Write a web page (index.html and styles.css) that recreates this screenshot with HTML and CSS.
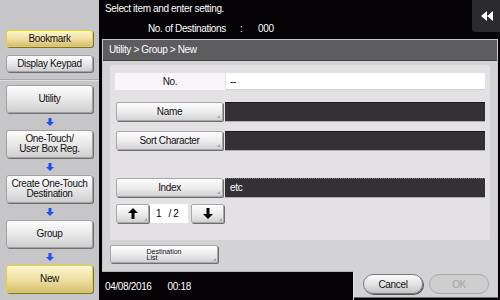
FILE: index.html
```html
<!DOCTYPE html>
<html lang="en">
<head>
  <meta charset="UTF-8">
  <title>Utility &gt; Group &gt; New</title>
  <link rel="stylesheet" href="styles.css">
</head>
<body>

  <div class="screen">

    <!-- Left menu -->
    <aside class="side">
      <div class="side-top">
        <button class="key key-on">Bookmark</button>
        <button class="key">Display Keypad</button>
      </div>
      <div class="steps">
        <button class="step">Utility</button>
        <span class="down"><svg width="8" height="8" viewBox="0 0 8 8"><path d="M2.5 0h3v4h2.5l-4 4-4-4h2.5z" fill="#1e4ff2"/></svg></span>
        <button class="step">One-Touch/<br>User Box Reg.</button>
        <span class="down"><svg width="8" height="8" viewBox="0 0 8 8"><path d="M2.5 0h3v4h2.5l-4 4-4-4h2.5z" fill="#1e4ff2"/></svg></span>
        <button class="step">Create One-Touch<br>Destination</button>
        <span class="down"><svg width="8" height="8" viewBox="0 0 8 8"><path d="M2.5 0h3v4h2.5l-4 4-4-4h2.5z" fill="#1e4ff2"/></svg></span>
        <button class="step">Group</button>
        <span class="down"><svg width="8" height="8" viewBox="0 0 8 8"><path d="M2.5 0h3v4h2.5l-4 4-4-4h2.5z" fill="#1e4ff2"/></svg></span>
        <button class="step step-on">New</button>
      </div>
    </aside>

    <main class="main">
      <header class="head">
        <div class="head-text">
          <p class="msg">Select item and enter setting.</p>
          <p class="count"><span class="count-label">No. of Destinations</span><span class="count-sep">:</span><span>000</span></p>
        </div>
        <button class="back">
          <svg width="12" height="10" viewBox="0 0 12 10"><path d="M6 0v10L0 5zM12 0v10L6 5z" fill="#fff"/></svg>
        </button>
      </header>

      <section class="win">
        <div class="win-title">Utility &gt; Group &gt; New</div>

        <div class="win-body">
          <div class="panel">
            <div class="row row-no">
              <div class="label">No.</div>
              <div class="value">--</div>
            </div>
            <div class="row">
              <button class="btn">Name</button>
              <div class="field"></div>
            </div>
            <div class="row">
              <button class="btn">Sort Character</button>
              <div class="field"></div>
            </div>
            <div class="row row-index">
              <button class="btn">Index</button>
              <div class="field field-dotted">etc</div>
            </div>
            <div class="pager">
              <button class="btn btn-arrow">
                <svg width="10" height="11" viewBox="0 0 10 11"><path d="M5 0l5 5H6.5v6h-3V5H0z" fill="#000"/></svg>
              </button>
              <div class="page">1&nbsp;&nbsp; / 2</div>
              <button class="btn btn-arrow">
                <svg width="10" height="11" viewBox="0 0 10 11"><path d="M5 11l5-5H6.5V0h-3v6H0z" fill="#000"/></svg>
              </button>
            </div>
          </div>
          <button class="btn btn-dest"><span>Destination<br>List</span></button>
        </div>

        <div class="win-foot">
          <div class="clock"><span>04/08/2016</span><span>00:18</span></div>
          <div class="actions">
            <button class="pill">Cancel</button>
            <button class="pill" disabled>OK</button>
          </div>
        </div>
      </section>
    </main>

  </div>

</body>
</html>
```

FILE: styles.css
```css
html, body {
  margin: 0;
  height: 100%;
  background: #050305;
  font-family: "Liberation Sans", Arial, sans-serif;
  font-size: 10px;
  letter-spacing: -0.35px;
}

p {
  margin: 0;
}

button {
  font-family: inherit;
  letter-spacing: inherit;
  padding: 0;
  cursor: pointer;
}

.screen {
  display: flex;
  width: 500px;
  height: 300px;
  overflow: hidden;
}

/* Left menu */
.side {
  width: 99px;
  flex: none;
  background: #c6c5c7;
  display: flex;
  flex-direction: column;
}

.side-top {
  display: flex;
  flex-direction: column;
  gap: 8px;
  padding: 30px 6px 0;
  height: 49px;
  border-bottom: 1px solid #a9a8aa;
  box-shadow: 0 1px 0 #dedde0;
}

.key,
.step {
  width: 87px;
  border: 1px solid #a2a1a3;
  border-radius: 3px;
  background: linear-gradient(#fdfdfd, #e6e6e6 55%, #cfcfcf);
  box-shadow: 1px 1px 0 #6f6e70;
  font-size: 10px;
  color: #111;
  line-height: 10px;
}

.key {
  height: 17px;
}

.key-on,
.step-on {
  border-color: #ecd31a;
  background: linear-gradient(#fcf6cf, #f0e1a4 50%, #d6bf72);
}

.steps {
  display: flex;
  flex-direction: column;
  align-items: center;
  padding-top: 5px;
}

.step {
  height: 28px;
}

.down {
  height: 17px;
  display: flex;
  align-items: center;
  justify-content: center;
}

/* Right side */
.main {
  flex: 1;
  display: flex;
  flex-direction: column;
  padding-left: 3px;
}

.head {
  height: 39px;
  display: flex;
  justify-content: space-between;
  color: #fff;
}

.head-text {
  padding: 3px 0 0 3px;
}

.msg {
  height: 20px;
}

.count {
  display: flex;
  padding-left: 43px;
  white-space: nowrap;
}

.count-label {
  width: 92px;
}

.count-sep {
  width: 18px;
}

.back {
  width: 28px;
  height: 32px;
  border: none;
  border-radius: 0 0 0 4px;
  background: #2b2a2c;
  display: flex;
  align-items: center;
  justify-content: center;
  padding-left: 2px;
}

/* Window */
.win {
  width: 394px;
  height: 257px;
  border: 1px solid #c9c8ca;
  border-bottom-color: #6d6c6e;
  background: #d3d2d4;
  display: flex;
  flex-direction: column;
}

.win-title {
  height: 20px;
  line-height: 20px;
  background: #5d5c5f;
  border-bottom: 1px solid #3e3d40;
  color: #fff;
  padding-left: 6px;
}

.win-body {
  flex: 1;
  padding: 4px 7px 0;
}

.panel {
  background: #e3e1e4;
  border-radius: 2px;
  height: 160px;
  padding: 8px 5px 7px;
}

.row {
  display: flex;
  height: 19px;
  margin-bottom: 10px;
}

.row-no {
  height: 17px;
  margin-bottom: 12px;
  line-height: 17px;
}

.row-index {
  margin-top: 28px;
  margin-bottom: 7px;
}

.label {
  width: 110px;
  background: #f9f5f9;
  text-align: center;
  color: #111;
}

.value {
  flex: 1;
  background: #fff;
  padding-left: 4px;
  margin-left: 1px;
  border-bottom: 1px solid #d0cfd1;
}

.btn {
  position: relative;
  width: 107px;
  height: 19px;
  margin-left: 1px;
  border: 1px solid #a8a7a9;
  border-radius: 2px;
  background: linear-gradient(#fdfdfd, #ebebeb 55%, #d2d2d2);
  box-shadow: 1px 1px 0 #6f6e70;
  font-size: 10px;
  color: #111;
}

.btn::after {
  content: "";
  position: absolute;
  right: 2px;
  bottom: 2px;
  border-left: 3px solid transparent;
  border-bottom: 3px solid #a3a2a4;
}

.field {
  flex: 1;
  margin-left: 2px;
  background: #333134;
  border-top: 1px solid #1b1a1c;
  box-shadow: 0 1px 0 #aeadaf;
  color: #fff;
  line-height: 18px;
  padding-left: 5px;
}

.field-dotted {
  border-top: 1px dotted #777;
}

.pager {
  display: flex;
  height: 19px;
  gap: 1px;
}

.btn-arrow {
  width: 33px;
  display: flex;
  align-items: center;
  justify-content: center;
}

.btn-arrow::after,
.btn-dest::after {
  right: 1px;
  bottom: 1px;
}

.page {
  width: 38px;
  background: #fff;
  line-height: 19px;
  padding-left: 6px;
  box-sizing: border-box;
  margin-right: 1px;
}

.btn-dest {
  width: 108px;
  height: 18px;
  margin: 5px 0 0 0;
  font-size: 7px;
  letter-spacing: 0;
  line-height: 6px;
  display: flex;
  justify-content: center;
  text-align: left;
  padding-top: 3px;
}

/* Footer */
.win-foot {
  height: 26px;
  display: flex;
}

.clock {
  width: 252px;
  margin-left: -1px;
  background: #050305;
  border-top: 1px solid #b5b4b6;
  border-right: 1px solid #e2e1e3;
  color: #fff;
  display: flex;
  gap: 16px;
  padding: 9px 0 0 3px;
  box-sizing: border-box;
  height: 31px;
}

.actions {
  flex: 1;
  display: flex;
  gap: 6px;
  padding: 3px 0 0 9px;
}

.pill {
  width: 60px;
  height: 20px;
  border: 1px solid #7a797b;
  border-radius: 10px;
  background: linear-gradient(#fbfbfb, #e4e4e4 50%, #c4c4c4);
  box-shadow: 1px 1px 0 #555;
  font-size: 10px;
  color: #111;
}

.pill:disabled {
  background: #cfcecf;
  border-color: #a9a8aa;
  box-shadow: none;
  color: #a5a4a6;
}
```
